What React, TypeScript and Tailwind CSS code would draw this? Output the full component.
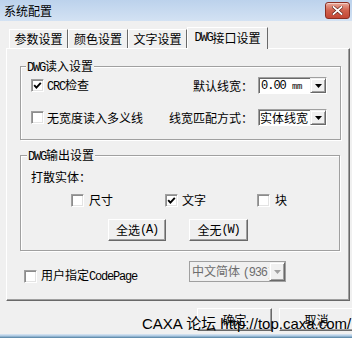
import React from "react";

const mono = "font-['Liberation_Mono',monospace] text-[12px] tracking-[-1.2px]";

function A({ children }: { children: React.ReactNode }) {
  return <span className={mono}>{children}</span>;
}

function CheckBox({ checked }: { checked?: boolean }) {
  return (
    <span className="flex w-[13px] h-[13px] shrink-0 items-center justify-center bg-white border border-t-[#a0a0a0] border-l-[#a0a0a0] border-b-white border-r-white shadow-[inset_1px_1px_0_#8c8c8c,inset_-1px_-1px_0_#e3e3e3]">
      {checked && (
        <svg width="9" height="9" viewBox="0 0 9 9">
          <path d="M1.2 4.2 L3.4 6.6 L7.8 1.8" fill="none" stroke="#000" strokeWidth="1.9" />
        </svg>
      )}
    </span>
  );
}

function Arrow({ disabled }: { disabled?: boolean }) {
  return (
    <span className="flex w-[16px] h-full shrink-0 items-center justify-center bg-[#f0f0f0] border border-t-[#f0f0f0] border-l-[#f0f0f0] border-b-[#696969] border-r-[#696969] shadow-[inset_1px_1px_0_#fff,inset_-1px_-1px_0_#a0a0a0]">
      <svg width="7" height="4" viewBox="0 0 7 4">
        <path d="M0 0 H7 L3.5 4 Z" fill={disabled ? "#a0a0a0" : "#000"} />
      </svg>
    </span>
  );
}

function Tab({ children, active, w }: { children: React.ReactNode; active?: boolean; w: string }) {
  if (active) {
    return (
      <div className={`relative z-10 -mb-px flex h-[22px] items-center justify-center bg-[#f0f0f0] border-t border-l border-t-white border-l-white border-r border-r-[#696969] pb-[2px] ${w}`}>
        {children}
      </div>
    );
  }
  return (
    <div className={`flex h-[19px] items-center justify-center border-t border-l border-t-white border-l-white border-r border-r-[#696969] ${w}`}>
      {children}
    </div>
  );
}

function Btn({ children, w, h }: { children: React.ReactNode; w: string; h: string }) {
  return (
    <div className={`flex shrink-0 items-center justify-center bg-[#f0f0f0] border border-t-white border-l-white border-b-[#696969] border-r-[#696969] shadow-[inset_-1px_-1px_0_#a0a0a0] ${w} ${h}`}>
      {children}
    </div>
  );
}

export default function App() {
  return (
    <div className="relative w-[352px] h-[338px] overflow-hidden bg-[#f0f0f0] text-[12px] leading-[14px] text-black font-['Noto_Sans_CJK_SC',sans-serif]">
      {/* Title bar */}
      <div className="flex h-[21px] items-center justify-between bg-linear-to-b from-[#bcd2ec] to-[#d3e2f3] pl-[4px] pr-[2px]">
        <span className="text-[12px] leading-[14px] pt-[1px]">系统配置</span>
        <div className="flex h-[17px] w-[25px] items-center justify-center rounded-[3px] border border-[#8b2e22] bg-linear-to-b from-[#e9a99b] via-[#d0614d] to-[#c24634] shadow-[inset_0_1px_0_#f4cfc6]">
          <svg width="11" height="9" viewBox="0 0 11 9">
            <path d="M1.5 1 L9.5 8 M9.5 1 L1.5 8" stroke="#5a1c14" strokeWidth="3" strokeLinecap="square" />
            <path d="M1.5 1 L9.5 8 M9.5 1 L1.5 8" stroke="#ffffff" strokeWidth="1.8" strokeLinecap="square" />
          </svg>
        </div>
      </div>

      {/* Tabs */}
      <div className="flex h-[27px] items-end pl-[9px]">
        <Tab w="w-[59px]">参数设置</Tab>
        <Tab w="w-[60px]">颜色设置</Tab>
        <Tab w="w-[59px]">文字设置</Tab>
        <Tab w="w-[81px]" active>
          <A>DWG</A>接口设置
        </Tab>
      </div>

      {/* Panel */}
      <div className="ml-[6px] flex h-[253px] w-[344px] flex-col border border-t-white border-l-white border-r-[#696969] border-b-[#696969] shadow-[inset_-1px_-1px_0_#a0a0a0]">
        {/* Group 1 */}
        <div className="relative ml-[13px] mt-[17px] h-[74px] w-[321px] border border-[#a0a0a0] shadow-[inset_1px_1px_0_#fff,1px_1px_0_#fff]">
          <span className="absolute -top-[8px] left-[5px] bg-[#f0f0f0] px-[1px]">
            <A>DWG</A>读入设置
          </span>
          <div className="flex flex-col gap-[15px] pl-[10px] pr-[13px] pt-[10px]">
            <div className="flex h-[17px] items-center justify-between">
              <div className="flex items-center gap-[3px]">
                <CheckBox checked />
                <span>
                  <A>CRC</A>检查
                </span>
              </div>
              <div className="flex h-full items-center gap-[5px]">
                <span>默认线宽：</span>
                <div className="flex h-[17px] w-[69px] items-center bg-white border border-t-[#a0a0a0] border-l-[#a0a0a0] border-b-white border-r-white shadow-[inset_1px_1px_0_#696969]">
                  <span className="flex-1 pl-[2px] pt-[1px] font-['Liberation_Mono',monospace] text-[12px] tracking-[-1px]">
                    0.00 <span className="text-[9px] tracking-[-0.4px]">mm</span>
                  </span>
                  <Arrow />
                </div>
              </div>
            </div>
            <div className="flex h-[17px] items-center justify-between">
              <div className="flex items-center gap-[3px]">
                <CheckBox />
                <span>无宽度读入多义线</span>
              </div>
              <div className="flex h-full items-center gap-[5px]">
                <span>线宽匹配方式：</span>
                <div className="flex h-[17px] w-[69px] items-center bg-white border border-t-[#a0a0a0] border-l-[#a0a0a0] border-b-white border-r-white shadow-[inset_1px_1px_0_#696969]">
                  <span className="flex-1 pl-[1px]">实体线宽</span>
                  <Arrow />
                </div>
              </div>
            </div>
          </div>
        </div>

        {/* Group 2 */}
        <div className="relative ml-[13px] mt-[15px] h-[96px] w-[320px] border border-[#a0a0a0] shadow-[inset_1px_1px_0_#fff,1px_1px_0_#fff]">
          <span className="absolute -top-[8px] left-[6px] bg-[#f0f0f0] px-[1px]">
            <A>DWG</A>输出设置
          </span>
          <div className="flex flex-col pl-[10px] pt-[14px]">
            <span>打散实体：</span>
            <div className="ml-[40px] mt-[9px] flex h-[14px] items-center">
              <div className="flex w-[94px] items-center gap-[5px]">
                <CheckBox />
                <span>尺寸</span>
              </div>
              <div className="flex w-[92px] items-center gap-[4px]">
                <CheckBox checked />
                <span>文字</span>
              </div>
              <div className="flex items-center gap-[5px]">
                <CheckBox />
                <span>块</span>
              </div>
            </div>
            <div className="ml-[77px] mt-[12px] flex gap-[23px]">
              <Btn w="w-[58px]" h="h-[22px]">
                全选<A>(A)</A>
              </Btn>
              <Btn w="w-[59px]" h="h-[22px]">
                全无<A>(W)</A>
              </Btn>
            </div>
          </div>
        </div>

        {/* CodePage row */}
        <div className="ml-[17px] mt-[10px] flex items-start">
          <div className="flex w-[165px] items-center gap-[4px] pt-[7px]">
            <CheckBox />
            <span>
              用户指定<A>CodePage</A>
            </span>
          </div>
          <div className="flex h-[21px] w-[97px] items-center overflow-hidden bg-[#f0f0f0] border border-[#a0a0a0]">
            <span className="flex-1 overflow-hidden whitespace-nowrap pl-[2px] text-[#6d6d6d]">
              中文简体 <A>(936)</A>
            </span>
            <Arrow disabled />
          </div>
        </div>
      </div>

      {/* Bottom buttons */}
      <div className="mt-[7px] flex gap-[7px] pl-[197px]">
        <Btn w="w-[75px]" h="h-[23px]">确定</Btn>
        <Btn w="w-[75px]" h="h-[23px]">取消</Btn>
      </div>

      {/* Watermark text over the buttons */}
      <span className="absolute left-[142px] top-[315px] whitespace-nowrap text-[15px] leading-[17px] text-black font-['Liberation_Sans','Noto_Sans_CJK_SC',sans-serif]">
        CAXA 论坛 http://top.caxa.com/
      </span>

      {/* Window bottom edge */}
      <div className="absolute bottom-0 left-0 h-[4px] w-full bg-linear-to-b from-[#dce8f4] via-[#a9c6e0] to-[#4d7d9e]" />
    </div>
  );
}
